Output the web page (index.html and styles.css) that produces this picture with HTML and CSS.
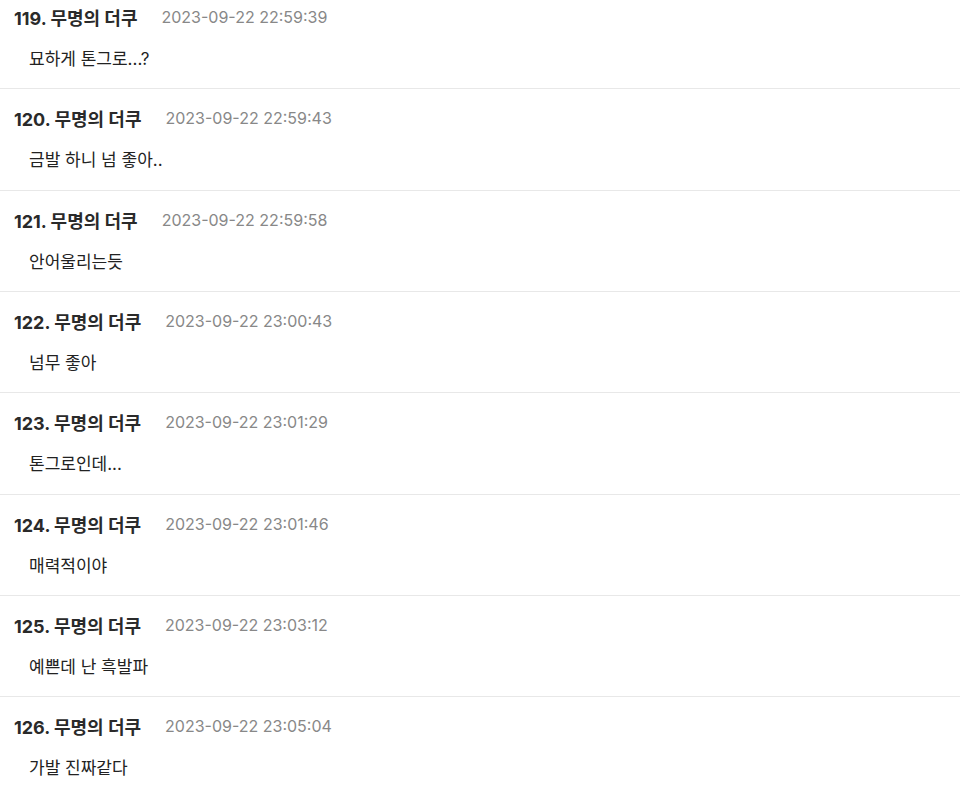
FILE: index.html
```html
<!DOCTYPE html>
<html lang="ko">
<head>
<meta charset="utf-8">
<link rel="stylesheet" href="styles.css">
</head>
<body>
<ul class="comments">
  <li class="comment"><div class="meta"><span class="name">119. 무명의 더쿠</span><span class="date">2023-09-22 22:59:39</span></div><p class="text">묘하게 톤그로...?</p></li>
  <li class="comment"><div class="meta"><span class="name">120. 무명의 더쿠</span><span class="date">2023-09-22 22:59:43</span></div><p class="text">금발 하니 넘 좋아..</p></li>
  <li class="comment"><div class="meta"><span class="name">121. 무명의 더쿠</span><span class="date">2023-09-22 22:59:58</span></div><p class="text">안어울리는듯</p></li>
  <li class="comment"><div class="meta"><span class="name">122. 무명의 더쿠</span><span class="date">2023-09-22 23:00:43</span></div><p class="text">넘무 좋아</p></li>
  <li class="comment"><div class="meta"><span class="name">123. 무명의 더쿠</span><span class="date">2023-09-22 23:01:29</span></div><p class="text">톤그로인데...</p></li>
  <li class="comment"><div class="meta"><span class="name">124. 무명의 더쿠</span><span class="date">2023-09-22 23:01:46</span></div><p class="text">매력적이야</p></li>
  <li class="comment"><div class="meta"><span class="name">125. 무명의 더쿠</span><span class="date">2023-09-22 23:03:12</span></div><p class="text">예쁜데 난 흑발파</p></li>
  <li class="comment"><div class="meta"><span class="name">126. 무명의 더쿠</span><span class="date">2023-09-22 23:05:04</span></div><p class="text">가발 진짜같다</p></li>
</ul>
</body>
</html>
```

FILE: styles.css
```css
html, body {
  margin: 0;
  padding: 0;
  background: #ffffff;
  overflow: hidden;
}
body {
  font-family: Inter, "Noto Sans CJK KR", sans-serif;
  color: #222222;
}
.comments {
  list-style: none;
  margin: -12px 0 0 0;
  padding: 0;
}
.comment {
  border-bottom: 1px solid #e8e8e8;
  padding: 17px 0 17.33px 0;
}
.meta {
  display: flex;
  align-items: center;
  height: 24px;
  padding-left: 14px;
  gap: 24px;
}
.name {
  font-size: 18px;
  font-weight: 700;
  color: #2a2a2a;
}
.date {
  font-size: 16px;
  color: #888888;
}
.text {
  margin: 18px 0 0 0;
  padding-left: 29px;
  font-size: 17px;
  line-height: 24px;
  color: #222222;
}
```
